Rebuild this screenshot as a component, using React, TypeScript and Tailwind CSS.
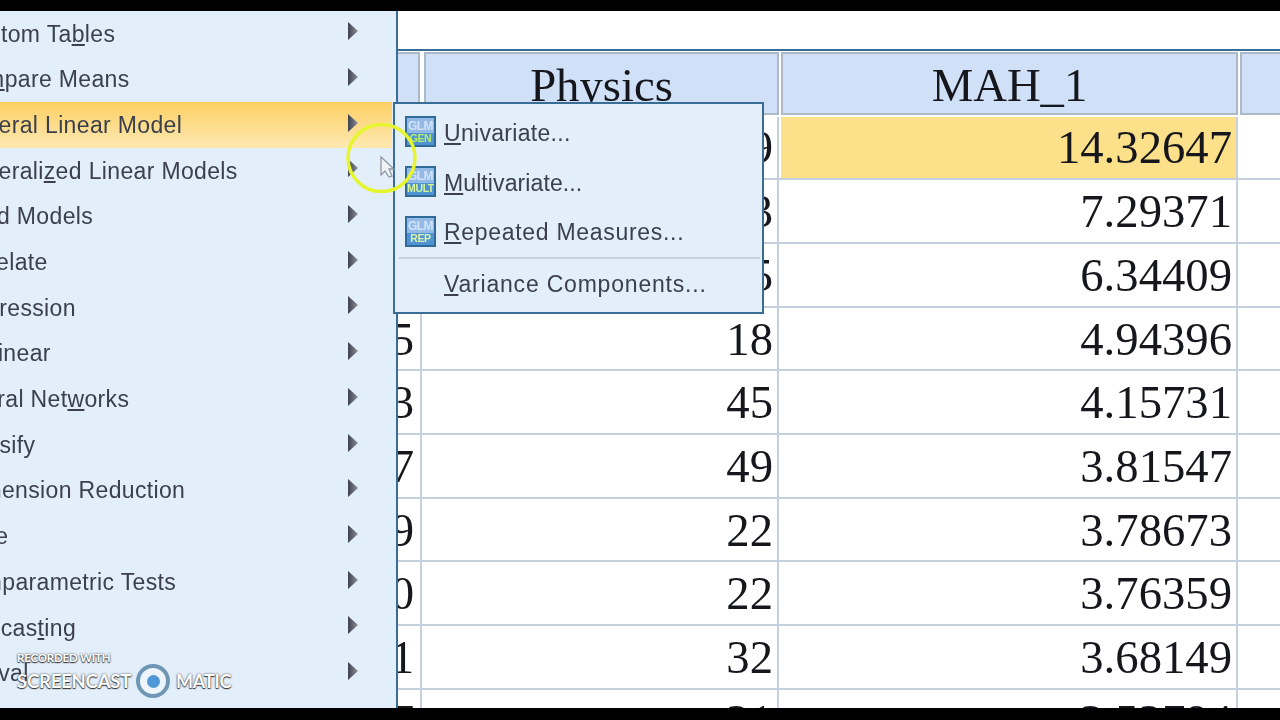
import React from "react";

const menu: { t: React.ReactNode; ml: string; active?: boolean }[] = [
  { t: <>Custom Ta<u>b</u>les</>, ml: "ml-[-41px]" },
  { t: <>Co<u>m</u>pare Means</>, ml: "ml-[-45px]" },
  { t: <>General Linear Model</>, ml: "ml-[-46px]", active: true },
  { t: <>Generali<u>z</u>ed Linear Models</>, ml: "ml-[-46px]" },
  { t: <>Mixed Models</>, ml: "ml-[-53px]" },
  { t: <>Correlate</>, ml: "ml-[-50px]" },
  { t: <>Regression</>, ml: "ml-[-44px]" },
  { t: <>Loglinear</>, ml: "ml-[-47px]" },
  { t: <>Neural Net<u>w</u>orks</>, ml: "ml-[-46px]" },
  { t: <>Classify</>, ml: "ml-[-48px]" },
  { t: <>Dimension Reduction</>, ml: "ml-[-40px]" },
  { t: <>Scale</>, ml: "ml-[-51px]" },
  { t: <>Nonparametric Tests</>, ml: "ml-[-41px]" },
  { t: <>Forecas<u>t</u>ing</>, ml: "ml-[-48px]" },
  { t: <>Survival</>, ml: "ml-[-56px]" },
];

const rows = [
  ["", "29", "14.32647"],
  ["", "33", "7.29371"],
  ["", "25", "6.34409"],
  ["25", "18", "4.94396"],
  ["13", "45", "4.15731"],
  ["17", "49", "3.81547"],
  ["19", "22", "3.78673"],
  ["10", "22", "3.76359"],
  ["11", "32", "3.68149"],
  ["17", "21", "3.52794"],
];

function Arrow() {
  return (
    <svg width="10" height="18" viewBox="0 0 10 18" className="shrink-0 mb-[5px]">
      <defs>
        <linearGradient id="ar" x1="0" x2="1" y1="0" y2="0">
          <stop offset="0" stopColor="#3d4250" />
          <stop offset="1" stopColor="#8b9098" />
        </linearGradient>
      </defs>
      <polygon points="0,0 10,9 0,18" fill="url(#ar)" />
    </svg>
  );
}

function GlmIcon({ label, color }: { label: string; color: string }) {
  return (
    <div className="w-[31px] h-[31px] mb-[3px] shrink-0 border-2 border-[#2f6a98] bg-[#4f93d2] flex flex-col items-center overflow-hidden font-['Liberation_Sans',sans-serif] font-bold leading-none">
      <div className="h-[15px] w-full bg-[#93b9e6] text-[#d3e3f7] text-[12px] text-center tracking-[-0.6px] pt-[2px]">GLM</div>
      <div className={`h-[12px] w-full text-[10.5px] text-center tracking-[-0.4px] ${color}`}>{label}</div>
    </div>
  );
}

export default function App() {
  return (
    <div className="relative w-[1280px] h-[720px] bg-black overflow-hidden flex flex-col">
      <div className="h-[11px] shrink-0 bg-black" />
      <div className="flex h-[697px] shrink-0 overflow-hidden blur-[0.4px]">
        <div className="w-[398px] shrink-0 bg-[#e3eefb] border-r-2 border-[#3a6d96] overflow-hidden font-['Liberation_Sans',sans-serif] text-[23px] text-[#3b404c]">
          {menu.map(({ t, ml, active }, i) => (
            <div key={i} className={`h-[45.7px] w-[392px] flex items-center justify-between pr-[34px] whitespace-nowrap ${active ? "bg-gradient-to-b from-[#fdd060] to-[#fde8b0]" : ""}`}>
              <span className={`${ml} tracking-[0.35px]`}>{t}</span>
              <Arrow />
            </div>
          ))}
        </div>
        <div className="flex-1 bg-white flex flex-col font-['Liberation_Serif',serif] text-[46.7px] text-[#15171c] leading-none">
          <div className="shrink-0 bg-white border-b-2 border-[#3a6d96] box-content h-[38px]" />
          <div className="grid grid-cols-[24px_357px_459px_1fr] h-[65.5px] shrink-0">
            {["", "Physics", "MAH_1", ""].map((h, i) => (
              <div key={i} className={`${i === 0 ? "pr-[2px]" : "pl-[2px]"} pt-[1px] pb-[2px] bg-white h-full`}>
                <div className={`h-full bg-[#cfe0f7] border-2 border-[#adb9c7] flex items-center justify-center pt-[4px] ${i === 0 ? "border-l-0" : ""} ${i === 3 ? "border-r-0" : ""}`}>{h}</div>
              </div>
            ))}
          </div>
          {rows.map((r, i) => (
            <div key={i} className="grid grid-cols-[24px_357px_459px_1fr] h-[63.7px] shrink-0">
              <div className="border-b-2 border-r-2 border-[#c6d0dc] flex items-center justify-end overflow-hidden pr-[6px] pt-[1px] whitespace-nowrap">{r[0]}</div>
              <div className="border-b-2 border-r-2 border-[#c6d0dc] flex items-center justify-end pr-[4px] pt-[1px]">{r[1]}</div>
              <div className="border-b-2 border-r-2 border-[#c6d0dc] pl-[2px]">
                <div className={`h-full flex items-center justify-end pr-[4px] pt-[1px] ${i === 0 ? "bg-[#fde08a]" : ""}`}>{r[2]}</div>
              </div>
              <div className="border-b-2 border-[#c6d0dc]" />
            </div>
          ))}
        </div>
      </div>
      <div className="flex-1 bg-black" />

      {/* cascading submenu */}
      <div className="absolute left-[393px] top-[102px] w-[371px] h-[212px] bg-[#e3eefb] border-2 border-[#3a6d96] flex flex-col pl-[10px] font-['Liberation_Sans',sans-serif] text-[23px] text-[#3b404c] blur-[0.4px]">
        <div className="h-[50px] mt-[4px] flex items-center gap-[8px]">
          <GlmIcon label="GEN" color="text-[#b9ef6a]" />
          <span className="tracking-[0.3px]"><u>U</u>nivariate...</span>
        </div>
        <div className="h-[50px] flex items-center gap-[8px]">
          <GlmIcon label="MULT" color="text-[#d4f59a]" />
          <span className="tracking-[0.1px]"><u>M</u>ultivariate...</span>
        </div>
        <div className="h-[49px] flex items-center gap-[8px]">
          <GlmIcon label="REP" color="text-[#d9f3b0]" />
          <span className="tracking-[0.7px]"><u>R</u>epeated Measures...</span>
        </div>
        <div className="h-[2px] mr-[2px] ml-[-6px] bg-[#c8d0da]" />
        <div className="h-[50px] flex items-center pl-[39px]">
          <span className="tracking-[0.8px]"><u>V</u>ariance Components...</span>
        </div>
      </div>

      {/* cursor highlight */}
      <svg className="absolute left-[340px] top-[117px]" width="84" height="84" viewBox="0 0 84 84" fill="none">
        <circle cx="41.5" cy="41" r="33.5" stroke="#e6f52e" strokeWidth="3.5" />
        <path d="M41 40 L41 58 L45 54 L49 60 L52 59 L49 52 L54 52 Z" fill="#eef3f8" stroke="#8f97a1" strokeWidth="1.3" />
      </svg>

      {/* watermark */}
      <div className="absolute left-[17px] top-[652px] font-['Lato',sans-serif] font-bold text-white [text-shadow:0_0_2px_#333,0_1px_1px_#333] leading-none">
        <div className="text-[11.5px] tracking-[-0.2px]">RECORDED WITH</div>
      </div>
      <div className="absolute left-[17px] top-[664px] h-[34px] flex items-center font-['Lato',sans-serif] font-bold text-white [text-shadow:0_0_2px_#333,0_1px_1px_#333] leading-none">
        <span className="text-[18.5px] w-[120px] tracking-[-0.2px]">SCREENCAST</span>
        <span className="w-[34px] h-[34px] rounded-full border-[4px] border-[#6f97b5] bg-[#eef4fb] flex items-center justify-center ml-[-1px]">
          <span className="w-[13px] h-[13px] rounded-full bg-[#4f97d6]" />
        </span>
        <span className="text-[18px] ml-[6px] tracking-[-0.2px]">MATIC</span>
      </div>
    </div>
  );
}
